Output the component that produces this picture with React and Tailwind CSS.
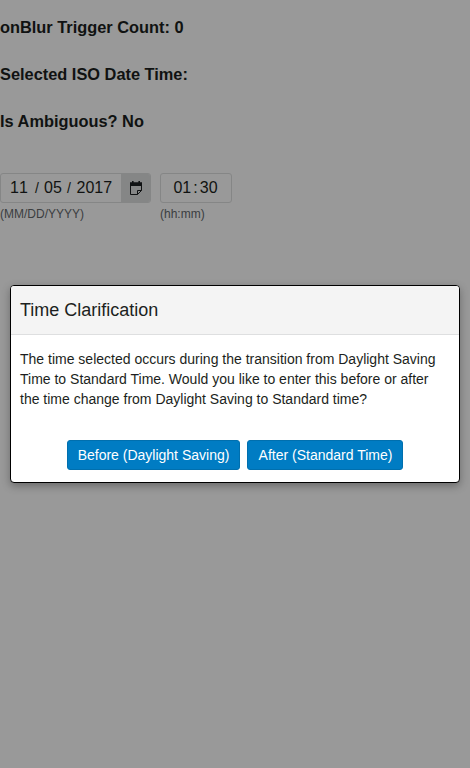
import React from 'react';

function CalendarIcon() {
  return (
    <svg width="14" height="14" viewBox="0 0 14 14" className="block shrink-0">
      <path d="M3 0h1.6v1.3h4.8V0H11v1.3h2V5H1V1.3h2z" fill="#1c1f21" />
      <path d="M1.5 4.5v9h7l4-4v-5M8.5 13.5v-4h4" fill="none" stroke="#1c1f21" strokeWidth="1" />
    </svg>
  );
}

function DateTimeForm() {
  return (
    <div className="pt-[17px] text-[#1c1f21]">
      <h3 className="h-[47px] text-[16.38px] leading-[20px] font-bold">onBlur Trigger Count: 0</h3>
      <h3 className="h-[47px] text-[16.38px] leading-[20px] font-bold">Selected ISO Date Time:</h3>
      <h3 className="h-[62px] text-[16.38px] leading-[20px] font-bold">Is Ambiguous? No</h3>
      <div className="flex gap-[9px]">
        <div>
          <div className="flex h-[30px] w-[151px] overflow-hidden rounded-[3px] border border-[#dedfe0]">
            <div className="flex h-full w-[120px] items-center text-[16px] leading-[28px]">
              <span className="ml-[9px] w-[25px] [font-kerning:none]">11</span>
              <span className="w-[9px] text-[14px]">/</span>
              <span className="w-[23px]">05</span>
              <span className="w-[9.5px] text-[14px]">/</span>
              <span>2017</span>
            </div>
            <div className="flex h-full flex-1 items-center bg-[#dedfe0] pl-[8px]">
              <CalendarIcon />
            </div>
          </div>
          <div className="mt-[3px] text-[12px] leading-[16px] text-[#64696c]">(MM/DD/YYYY)</div>
        </div>
        <div>
          <div className="flex h-[30px] w-[72px] items-center rounded-[3px] border border-[#dedfe0] pl-[12.4px] text-[16px] leading-[28px]">
            <span className="w-[19.8px]">01</span>
            <span className="w-[6.6px]">:</span>
            <span>30</span>
          </div>
          <div className="mt-[3px] text-[12px] leading-[16px] text-[#64696c]">(hh:mm)</div>
        </div>
      </div>
    </div>
  );
}

function ChoiceButton({ children, className }) {
  return (
    <button className={`h-[30px] rounded-[3px] border border-[#006fae] bg-[#007cc3] text-[14px] leading-[28px] whitespace-nowrap text-white ${className}`}>
      {children}
    </button>
  );
}

function ClarificationDialog() {
  return (
    <div role="dialog" className="mx-[10px] mt-[285px] h-[198px] overflow-hidden rounded-[4px] border border-black bg-white text-[#1c1f21] shadow-[0_3px_8px_rgba(0,0,0,0.3)]">
      <div className="h-[49px] border-b border-[#dedfe0] bg-[#f4f4f4] pl-[9px] text-[18px] leading-[48px]">Time Clarification</div>
      <div className="pt-[14px] pl-[9px] text-[14px] leading-[20px] whitespace-nowrap">
        <p>The time selected occurs during the transition from Daylight Saving</p>
        <p>Time to Standard Time. Would you like to enter this before or after</p>
        <p>the time change from Daylight Saving to Standard time?</p>
      </div>
      <div className="mt-[31px] flex justify-center gap-[7px]">
        <ChoiceButton className="w-[173px]">Before (Daylight Saving)</ChoiceButton>
        <ChoiceButton className="w-[156px] pl-[1px]">After (Standard Time)</ChoiceButton>
      </div>
    </div>
  );
}

export default function App() {
  return (
    <div className="relative h-[768px] w-[470px] overflow-hidden bg-white font-['Liberation_Sans',Arial,sans-serif]">
      <DateTimeForm />
      <div className="absolute inset-0 flow-root bg-black/40">
        <ClarificationDialog />
      </div>
    </div>
  );
}
